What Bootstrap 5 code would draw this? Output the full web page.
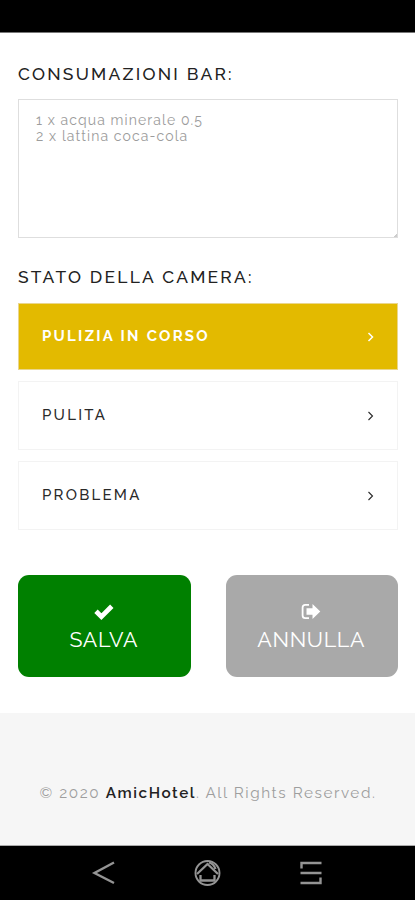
<!DOCTYPE html>
<html lang="it">
<head>
<meta charset="utf-8">
<meta name="viewport" content="width=device-width, initial-scale=1">
<title>AmicHotel</title>
<link href="https://cdn.jsdelivr.net/npm/bootstrap@5.3.0/dist/css/bootstrap.min.css" rel="stylesheet">
<style>
  body { font-family: Raleway, Lato, "Open Sans", sans-serif; color: #1c1c1c; letter-spacing: 1px; }
  .status-strip { height: 33px; background: #000; border-bottom: 1px solid #777; }
  .page-body { height: 680px; padding: 30px 17px 0 18px; }
  .section-title { font-size: 17.4px; line-height: 22px; font-weight: 500; letter-spacing: 2.24px; color: #222; }
  .room-title { margin-top: 28px; }
  .notes { height: 139px; margin-top: 14px; padding: 12px 17px; font-size: 14px; line-height: 16px; letter-spacing: 1.1px; color: #9c9c9c; resize: none; border-color: #dedede;
    background: #fff linear-gradient(135deg, transparent 50%, #ccc 50%) no-repeat right bottom / 3px 3px; }
  .state-list { gap: 11px; margin-top: 15px; }
  .state-item { height: 69px; padding: 0 23px 0 23px; border: 1px solid #f3f3f3; color: #2a2a2a; font-size: 15px; font-weight: 500; letter-spacing: 2.25px; }
  .state-item.is-current { height: 67px; background: #e3ba00; border-color: #ead68c; color: #fff; font-weight: 700; }
  .actions { margin-top: 45px; gap: 35px; }
  .action { height: 102px; border-radius: 11px; color: #fff; font-size: 21.4px; line-height: 28px; letter-spacing: .7px; padding: 3px 1px 0 0; border: 0; }
  .action svg { margin: -1px 0 2px 0; }
  .action-save { background: #008000; }
  .action-cancel { background: #a9a9a9; }
  .site-footer { height: 133px; background: #f6f6f6; border-bottom: 1px solid #aaa; padding: 69px 0 0 1px; font-size: 15.3px; line-height: 22px; color: #9e9e9e; letter-spacing: 1.56px; }
  .site-footer strong { color: #222; font-weight: 600; }
  .system-nav { height: 54px; background: #000; padding-right: 3px; }
</style>
</head>
<body class="bg-white overflow-hidden">
<div class="status-strip"></div>
<main class="page-body">
  <label for="notes" class="section-title d-block text-nowrap">CONSUMAZIONI BAR:</label>
  <textarea id="notes" class="notes form-control rounded-0 overflow-hidden shadow-none">1 x acqua minerale 0.5
2 x lattina coca-cola</textarea>
  <h2 class="section-title room-title text-nowrap mb-0">STATO DELLA CAMERA:</h2>
  <div class="state-list d-flex flex-column">
    <a href="#" class="state-item is-current d-flex align-items-center justify-content-between text-decoration-none">PULIZIA IN CORSO
      <svg width="8" height="10" viewBox="0 0 8 10" fill="none" stroke="currentColor" stroke-width="1.5"><path d="M2.500 1 6.500 5 2.500 9"/></svg></a>
    <a href="#" class="state-item d-flex align-items-center justify-content-between text-decoration-none">PULITA
      <svg width="8" height="10" viewBox="0 0 8 10" fill="none" stroke="currentColor" stroke-width="1.1"><path d="M2.500 1 6.500 5 2.500 9"/></svg></a>
    <a href="#" class="state-item d-flex align-items-center justify-content-between text-decoration-none">PROBLEMA
      <svg width="8" height="10" viewBox="0 0 8 10" fill="none" stroke="currentColor" stroke-width="1.1"><path d="M2.500 1 6.500 5 2.500 9"/></svg></a>
  </div>
  <div class="actions d-flex">
    <button type="button" class="action action-save flex-fill w-50 d-flex flex-column align-items-center justify-content-center">
      <svg class="d-block" width="20" height="24" viewBox="0 0 20 24" fill="none" stroke="#fff" stroke-width="4.8"><path d="M2 11.2 7.4 16.6 17.8 6.2"/></svg>
      <span>SALVA</span>
    </button>
    <button type="button" class="action action-cancel flex-fill w-50 d-flex flex-column align-items-center justify-content-center">
      <svg class="d-block" width="20" height="24" viewBox="0 0 20 24"><path d="M8 4.9H4.2Q1.6 4.9 1.6 7.5v8q0 2.6 2.6 2.6H8" fill="none" stroke="#fff" stroke-width="1.8"/><path d="M5.500 8.200h6V4L19.300 11.500 11.500 19V14.800h-6z" fill="#fff"/></svg>
      <span>ANNULLA</span>
    </button>
  </div>
</main>
<footer class="site-footer text-center text-nowrap">© 2020 <strong>AmicHotel</strong>. All Rights Reserved.</footer>
<nav class="system-nav d-flex justify-content-center align-items-center">
  <svg width="232" height="30" viewBox="0 0 232 30" fill="none" stroke="#949494" stroke-width="2.4">
    <path d="M24 4.500 4.500 15 24 25"/>
    <circle cx="117.500" cy="15" r="12" stroke-width="1.9"/>
    <path d="M107 16 117.500 6 128 16M110.500 17V22.500H124.500V17M119 4.500Q124 6 125.500 11" stroke-width="2.3"/>
    <path d="M231.500 5H211.500V10.500M210.500 15H231.500M210.500 25H230.500V19.500"/>
  </svg>
</nav>
<script src="https://cdn.jsdelivr.net/npm/bootstrap@5.3.0/dist/js/bootstrap.bundle.min.js"></script>
</body>
</html>
